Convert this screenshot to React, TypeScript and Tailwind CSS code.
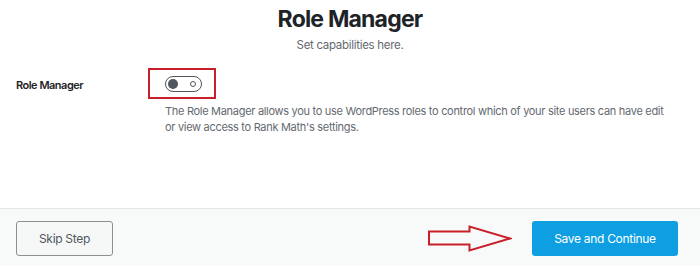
import { useState } from 'react'

const Arrow = () => (
  <svg width="84" height="27" viewBox="0 0 84 27" fill="none">
    <path
      d="M1 6.5 H41.5 V1.5 L82 13.5 L41.5 25.5 V19.5 H1 Z"
      stroke="#c8202a"
      strokeWidth="2"
      strokeLinejoin="miter"
    />
  </svg>
)

const App = () => {
  const [enabled, setEnabled] = useState(false)

  return (
    <div className="w-[700px] h-[266px] bg-white flex flex-col font-['Inter',sans-serif] overflow-hidden">
      <div className="flex flex-col items-center pt-[3px]">
        <h1 className="text-[23px] leading-[32px] font-bold text-[#1d2327] tracking-[-0.8px]">
          Role Manager
        </h1>
        <p className="text-[11.5px] leading-[16px] text-[#646970] mt-[2px] tracking-[-0.3px]">
          Set capabilities here.
        </p>
      </div>

      <div className="flex flex-1 pt-[15px]">
        <div className="w-[148px] pl-4 pt-[9px] text-[11px] font-semibold text-[#1d2327] tracking-[-0.5px]">
          Role Manager
        </div>
        <div className="flex flex-col">
          <div className="w-[68px] h-[31px] border-2 border-[#c8202a] flex items-center pl-[15px]">
            <button
              onClick={() => setEnabled(!enabled)}
              className="w-[37px] h-[16px] rounded-full border-[1.5px] border-[#50575e] flex items-center justify-between px-[2px]"
            >
              <span className="w-[10px] h-[10px] rounded-full bg-[#50575e]" />
              <span className="w-[6px] h-[6px] rounded-full border-[1.5px] border-[#50575e] mr-[3px]" />
            </button>
          </div>
          <p className="ml-[17px] mt-[4px] w-[510px] text-[11px] leading-[16px] text-[#646970] tracking-[-0.3px]">
            The Role Manager allows you to use WordPress roles to control which of your site users can have edit
            or view access to Rank Math's settings.
          </p>
        </div>
      </div>

      <div className="h-[58px] border-t border-[#e2e4e7] bg-[#f8f9f9] flex items-center justify-between pl-4 pr-[22px] pt-[2px]">
        <button className="w-[97px] h-[35px] rounded-[3px] border border-[#8c8f94] bg-[#f6f7f7] text-[12px] tracking-[-0.3px] text-[#50575e]">
          Skip Step
        </button>
        <div className="flex items-center gap-[20px]">
          <Arrow />
          <button className="w-[146px] h-[35px] rounded-[3px] bg-[#0e9fe3] text-[12px] tracking-[-0.3px] text-white">
            Save and Continue
          </button>
        </div>
      </div>
    </div>
  )
}

export default App
